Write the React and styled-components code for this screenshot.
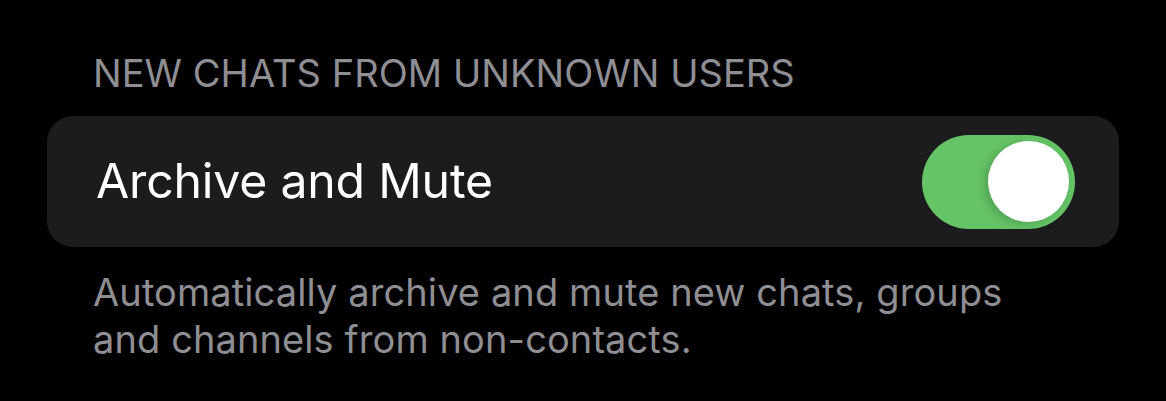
import React, { useState } from "react";
import styled, { createGlobalStyle } from "styled-components";

const GlobalStyle = createGlobalStyle`
  html, body {
    margin: 0;
    background: #000;
  }
  body {
    font-family: Inter, "Noto Sans", sans-serif;
    -webkit-font-smoothing: antialiased;
  }
`;

const Page = styled.div`
  width: 1166px;
  height: 401px;
  background: #000;
  padding: 48px 47px 0 47px;
  box-sizing: border-box;
`;

const SectionHeader = styled.div`
  padding-left: 46px;
  font-size: 38px;
  line-height: 50px;
  letter-spacing: 0.05px;
  color: #8e8e93;
  text-transform: uppercase;
`;

const Card = styled.div`
  margin-top: 18px;
  height: 131px;
  background: #1c1c1e;
  border-radius: 26px;
  display: flex;
  align-items: center;
  justify-content: space-between;
  padding: 0 44px 0 49px;
`;

const RowLabel = styled.span`
  font-size: 48.2px;
  color: #fff;
  letter-spacing: -0.2px;
  padding-bottom: 2px;
`;

const Track = styled.button`
  width: 153px;
  height: 94px;
  border: none;
  border-radius: 47px;
  padding: 0 6px;
  background: ${(p) => (p.on ? "#65c466" : "#39393d")};
  display: flex;
  align-items: center;
  justify-content: ${(p) => (p.on ? "flex-end" : "flex-start")};
  cursor: pointer;
`;

const Knob = styled.span`
  width: 81px;
  height: 81px;
  border-radius: 50%;
  background: #fff;
  box-shadow: -4px 2px 10px rgba(0, 0, 0, 0.18);
`;

const Footer = styled.p`
  margin: 22px 0 0;
  padding-left: 46px;
  font-size: 38px;
  line-height: 47px;
  letter-spacing: 0.1px;
  color: #8e8e93;
  white-space: nowrap;
`;

export default function App() {
  const [on, setOn] = useState(true);
  return (
    <Page>
      <GlobalStyle />
      <SectionHeader>New Chats from Unknown Users</SectionHeader>
      <Card>
        <RowLabel>Archive and Mute</RowLabel>
        <Track on={on} onClick={() => setOn(!on)}>
          <Knob />
        </Track>
      </Card>
      <Footer>
        Automatically archive and mute new chats, groups
        <br />
        and channels from non-contacts.
      </Footer>
    </Page>
  );
}
